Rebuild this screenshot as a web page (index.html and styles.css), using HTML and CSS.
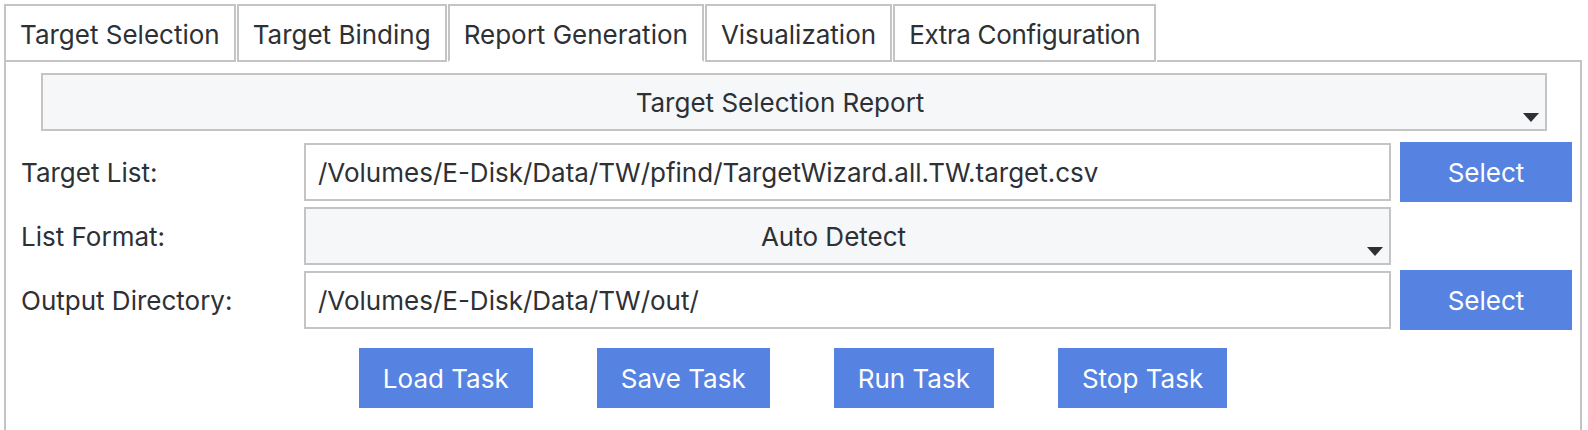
FILE: index.html
```html
<!DOCTYPE html>
<html>
<head>
<meta charset="utf-8">
<link rel="stylesheet" href="styles.css">
</head>
<body>
<div class="tabbar">
  <div class="tab">Target Selection</div>
  <div class="tab">Target Binding</div>
  <div class="tab active">Report Generation</div>
  <div class="tab">Visualization</div>
  <div class="tab tight">Extra Configuration</div>
  <div class="tab-fill"></div>
</div>
<div class="panel">
  <div class="combo report-combo">
    <span class="combo-text">Target Selection Report</span>
    <span class="arrow"></span>
  </div>
  <div class="form">
    <div class="label">Target List:</div>
    <div class="field">/Volumes/E-Disk/Data/TW/pfind/TargetWizard.all.TW.target.csv</div>
    <div class="btn select">Select</div>

    <div class="label">List Format:</div>
    <div class="combo">
      <span class="combo-text">Auto Detect</span>
      <span class="arrow"></span>
    </div>
    <div class="empty"></div>

    <div class="label">Output Directory:</div>
    <div class="field">/Volumes/E-Disk/Data/TW/out/</div>
    <div class="btn select">Select</div>
  </div>
  <div class="actions">
    <div class="btn action">Load Task</div>
    <div class="btn action">Save Task</div>
    <div class="btn action">Run Task</div>
    <div class="btn action">Stop Task</div>
  </div>
</div>
</body>
</html>
```
FILE: styles.css
```css
html, body {
  margin: 0;
  padding: 0;
  background: #ffffff;
}
body {
  font-family: Inter, "Liberation Sans", sans-serif;
  font-size: 26px;
  color: #2d3136;
  overflow: hidden;
}
.tabbar {
  display: flex;
  margin: 4px 6px 0 4px;
  height: 58px;
}
.tab {
  display: flex;
  align-items: center;
  padding: 3px 14px 0 14px;
  border: 2px solid #c4c4c4;
  background: #fff;
  margin-right: 1px;
  white-space: nowrap;
}
.tab.tight {
  letter-spacing: -0.35px;
}
.tab.active {
  border-bottom-color: #fff;
}
.tab-fill {
  flex: 1;
  border-bottom: 2px solid #c4c4c4;
  border-right: 2px solid #c4c4c4;
  margin-top: 56px;
  height: 0;
}
.panel {
  margin: 0 6px 0 4px;
  height: 368px;
  border-left: 2px solid #c4c4c4;
  border-right: 2px solid #c4c4c4;
  padding-top: 11px;
  box-sizing: border-box;
}
.combo {
  display: flex;
  height: 58px;
  box-sizing: border-box;
  border: 2px solid #c4c4c4;
  background: #f6f7f8;
  align-self: center;
}
.report-combo {
  margin: 0 33px 0 35px;
}
.combo-text {
  flex: 1;
  display: flex;
  align-items: center;
  justify-content: center;
  padding-top: 1px;
}
.arrow {
  align-self: flex-end;
  width: 0;
  height: 0;
  margin: 0 6px 7px 6px;
  border-left: 8px solid transparent;
  border-right: 8px solid transparent;
  border-top: 9px solid #2d3136;
}
.form {
  display: grid;
  grid-template-columns: 274px 1fr 172px;
  grid-auto-rows: 60px;
  column-gap: 9px;
  row-gap: 4px;
  padding: 0 8px 0 15px;
  margin-top: 11px;
  align-items: center;
}
.label {
  padding-top: 1px;
}
.field {
  height: 58px;
  box-sizing: border-box;
  border: 2px solid #c4c4c4;
  background: #fff;
  display: flex;
  align-items: center;
  padding: 1px 12px 0 12px;
  white-space: nowrap;
  overflow: hidden;
}
.btn {
  background: #5682e1;
  color: #ffffff;
  display: flex;
  align-items: center;
  justify-content: center;
  height: 60px;
  box-sizing: border-box;
  padding-top: 1px;
  white-space: nowrap;
}
.actions {
  display: flex;
  justify-content: center;
  gap: 64px;
  margin-top: 18px;
}
.action {
  padding: 1px 24px 0 24px;
}
```
